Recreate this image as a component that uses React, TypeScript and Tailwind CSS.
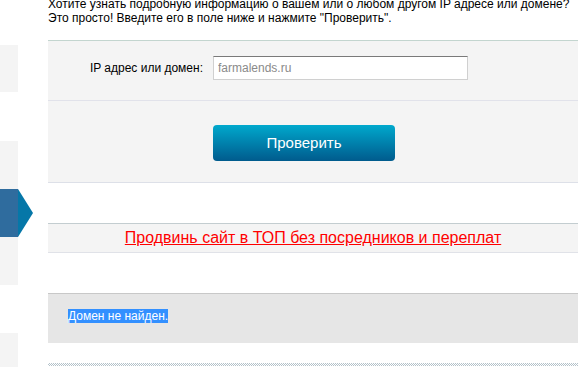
const font = { fontFamily: '"Liberation Sans", Arial, sans-serif' };

function SideStrip(): JSX.Element {
  return (
    <div className="flex w-[48px] shrink-0 flex-col">
      <div className="h-[45px]" />
      <div className="h-[47px] w-[18px] bg-[#f4f4f4]" />
      <div className="h-[49px]" />
      <div className="h-[48px] w-[18px] bg-[#f4f4f4]" />
      <div className="flex h-[48px] items-stretch">
        <div className="w-[18px] bg-[#2f6c9e]" />
        <svg width="15" height="48" viewBox="0 0 15 48" className="block">
          <polygon points="0,0 15,24 0,48" fill="#0577a8" />
        </svg>
      </div>
      <div className="h-[48px] w-[18px] bg-[#f4f4f4]" />
      <div className="h-[48px]" />
      <div className="h-[34px] w-[18px] bg-[#f4f4f4]" />
    </div>
  );
}

export default function App(): JSX.Element {
  return (
    <div className="flex h-[367px] w-[587px] overflow-hidden bg-white text-black" style={font}>
      <SideStrip />
      <div className="flex w-[530px] shrink-0 flex-col">
        <p className="-mt-[3px] h-[43px] whitespace-nowrap text-[12px] leading-[14px] text-black">
          Хотите узнать подробную информацию о вашем или о любом другом IP адресе или домене?
          <br />
          Это просто! Введите его в поле ниже и нажмите "Проверить".
        </p>

        <div className="border-t border-[#c3d5cf] bg-[#f4f4f4]">
          <div className="flex h-[60px] items-start border-b border-[#e1e2ea] pt-[15px]">
            <label className="mt-[5px] w-[155px] text-right text-[12px] leading-[14px]">
              IP адрес или домен:
            </label>
            <input
              type="text"
              defaultValue="farmalends.ru"
              className="ml-[10px] h-[24px] w-[255px] border border-[#d0d0d0] border-t-[#7a7a7a] bg-white px-[4px] text-[12px] text-[#8a8a8a] outline-none"
              style={font}
            />
          </div>

          <div className="h-[82px] border-b border-[#dde0e8] pt-[24px]">
            <button
              type="button"
              className="ml-[165px] h-[36px] w-[182px] rounded-[4px] bg-gradient-to-b from-[#00a9cd] to-[#005b8d] text-[15px] text-white"
              style={font}
            >
              Проверить
            </button>
          </div>
        </div>

        <div className="h-[40px]" />

        <div className="flex h-[30px] items-center justify-center border-y border-t-[#c3cdd0] border-b-[#e0e2e8] bg-[#f4f4f4]">
          <a href="#" className="text-[16px] leading-[18px] text-[#ff0000] underline">
            Продвинь сайт в ТОП без посредников и переплат
          </a>
        </div>

        <div className="h-[40px]" />

        <div className="h-[50px] border-t border-[#c8c8c8] bg-[#e6e6e6] pl-[20px] pt-[15px] text-[12px] leading-[14px]">
          <span className="bg-[#3390ff] text-white">Домен не найден.</span>
        </div>

        <div className="h-[20px]" />

        <div className="h-[3px] bg-[conic-gradient(#b4c2ca_25%,#ffffff_0_50%,#b4c2ca_0_75%,#ffffff_0)] bg-[length:2px_2px]" />
      </div>
    </div>
  );
}
